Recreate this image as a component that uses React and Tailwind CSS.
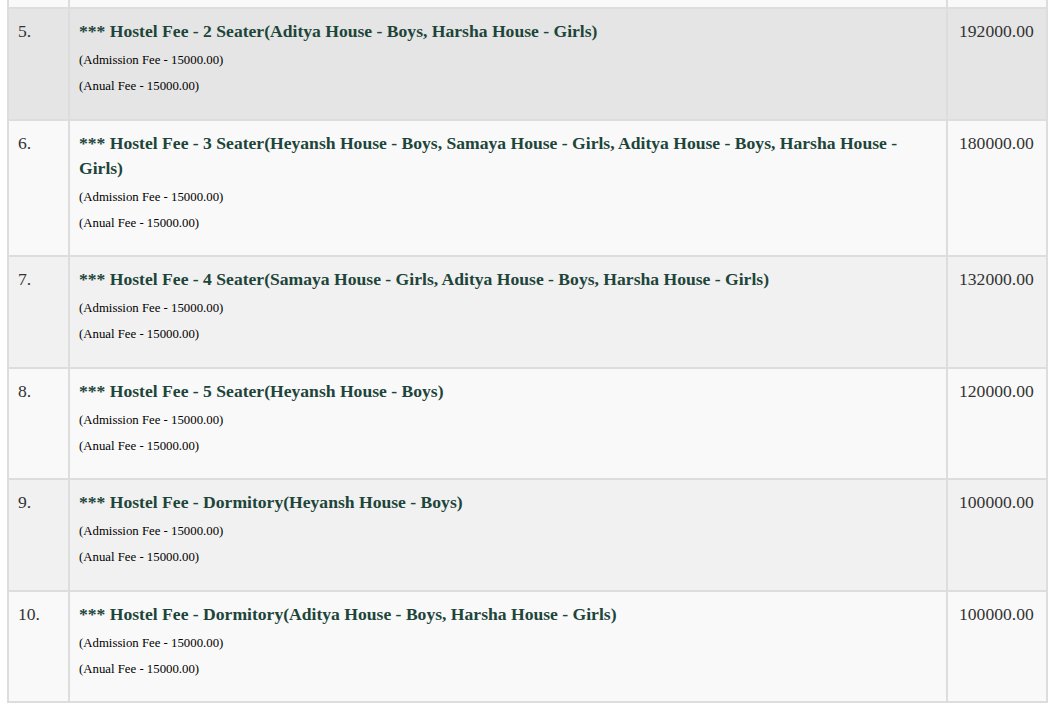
import React from "react";

const fees = [
  { no: "5.", title: "*** Hostel Fee - 2 Seater(Aditya House - Boys, Harsha House - Girls)", amount: "192000.00", bg: "bg-[#e5e5e5]" },
  { no: "6.", title: "*** Hostel Fee - 3 Seater(Heyansh House - Boys, Samaya House - Girls, Aditya House - Boys, Harsha House - Girls)", amount: "180000.00", bg: "bg-[#f9f9f9]" },
  { no: "7.", title: "*** Hostel Fee - 4 Seater(Samaya House - Girls, Aditya House - Boys, Harsha House - Girls)", amount: "132000.00", bg: "bg-[#f1f1f1]" },
  { no: "8.", title: "*** Hostel Fee - 5 Seater(Heyansh House - Boys)", amount: "120000.00", bg: "bg-[#f9f9f9]" },
  { no: "9.", title: "*** Hostel Fee - Dormitory(Heyansh House - Boys)", amount: "100000.00", bg: "bg-[#f1f1f1]" },
  { no: "10.", title: "*** Hostel Fee - Dormitory(Aditya House - Boys, Harsha House - Girls)", amount: "100000.00", bg: "bg-[#f9f9f9]" },
];

export default function App() {
  return (
    <div className="bg-white min-h-[709px] pl-[7px] pr-[9px] font-['Liberation_Serif','Times_New_Roman',serif]">
      <table className="w-full border-collapse text-[#333333] text-[17.6px] leading-[25px]">
        <colgroup>
          <col className="w-[61px]" />
          <col />
          <col className="w-[100px]" />
        </colgroup>
        <tbody>
          <tr className="bg-[#f9f9f9]">
            <td className="h-[8px] p-0 border-2 border-t-0 border-[#dddddd]"></td>
            <td className="h-[8px] p-0 border-2 border-t-0 border-[#dddddd]"></td>
            <td className="h-[8px] p-0 border-2 border-t-0 border-[#dddddd]"></td>
          </tr>
          {fees.map((f) => (
            <tr key={f.no} className={f.bg}>
              <td className="align-top border-2 border-[#dddddd] pl-[9px] pt-[10px] pb-[19.5px]">{f.no}</td>
              <td className="align-top border-2 border-[#dddddd] pl-[9px] pr-[10px] pt-[10px] pb-[19.5px]">
                <h4 className="font-bold text-[#1d4539]">{f.title}</h4>
                <p className="mt-[3px] text-[12.8px] leading-[26px] text-black">(Admission Fee - 15000.00)</p>
                <p className="text-[12.8px] leading-[26px] text-black">(Anual Fee - 15000.00)</p>
              </td>
              <td className="align-top border-2 border-[#dddddd] pl-[11px] pt-[10px] pb-[19.5px]">{f.amount}</td>
            </tr>
          ))}
        </tbody>
      </table>
    </div>
  );
}
